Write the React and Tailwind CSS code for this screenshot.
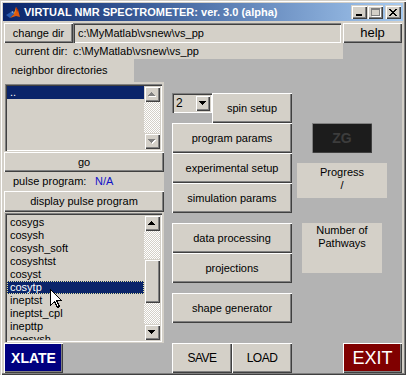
import clsx from "clsx";
import { twMerge } from "tailwind-merge";

// win classic bevels
const raised = "shadow-[inset_1px_1px_0_#fff,inset_-1px_-1px_0_#404040,inset_-2px_-2px_0_#808080]";
const raised2 = "shadow-[inset_1px_1px_0_#d4d0c8,inset_2px_2px_0_#fff,inset_-1px_-1px_0_#404040,inset_-2px_-2px_0_#808080]";
const sunken = "shadow-[inset_1px_1px_0_#808080,inset_2px_2px_0_#404040,inset_-1px_-1px_0_#fff,inset_-2px_-2px_0_#d4d0c8]";

const Button = ({ className, children }) => (
  <div
    className={twMerge(
      "flex shrink-0 items-center justify-center bg-[#d4d0c8] font-normal text-black",
      raised,
      className
    )}
  >
    {children}
  </div>
);

const Tri = ({ up, disabled }) => {
  const d = up
    ? "M3 0h1v1H3zM2 1h3v1H2zM1 2h5v1H1zM0 3h7v1H0z"
    : "M0 0h7v1H0zM1 1h5v1H1zM2 2h3v1H2zM3 3h1v1H3z";
  return (
    <svg width="8" height="5" viewBox="0 0 8 5" shapeRendering="crispEdges">
      {disabled && <path d={d} fill="#fff" transform="translate(1 1)" />}
      <path d={d} fill={disabled ? "#808080" : "#000"} />
    </svg>
  );
};

const ArrowBtn = ({ up, disabled }) => (
  <div className={clsx("flex h-[16px] w-[16px] shrink-0 items-center justify-center bg-[#d4d0c8]", raised2)}>
    <Tri up={up} disabled={disabled} />
  </div>
);

const checker =
  "bg-[repeating-conic-gradient(#ffffff_0_25%,#d4d0c8_0_50%)] bg-size-[2px_2px]";

const ListBox = ({ items, selected, focus, thumb, className }) => (
  <div className={clsx("shrink-0 bg-[#d4d0c8] pl-[1px] pr-[2px]", className)}>
    <div className={clsx("flex h-full p-[2px]", sunken)}>
      <div className={clsx("min-w-0 flex-1 overflow-hidden", thumb && "pt-[1px]")}>
        {items.map((it) => (
          <div
            key={it}
            className={clsx(
              "h-[13px] whitespace-nowrap pl-[3px] leading-[13px]",
              it === selected && "bg-[#0a246a] text-white",
              it === selected && focus && "outline-1 -outline-offset-1 outline-dotted outline-[#e0e0a0]"
            )}
          >
            {it}
          </div>
        ))}
      </div>
      <div className={clsx("flex w-[16px] flex-col", checker)}>
        <ArrowBtn up disabled={!thumb} />
        {thumb ? (
          <>
            <div className="h-[28px]" />
            <div className={clsx("h-[44px] bg-[#d4d0c8]", raised2)} />
            <div className="flex-1" />
          </>
        ) : (
          <div className="flex-1" />
        )}
        <ArrowBtn disabled={!thumb} />
      </div>
    </div>
  </div>
);

const MatlabIcon = () => (
  <svg width="16" height="16" viewBox="0 0 16 16">
    <path d="M1 11 L6 8 L9 10 L5 14 Z" fill="#2a5db0" />
    <path d="M5 14 L9 10 L11 3 L13 6 L15 13 L11 12 Z" fill="#e05a10" />
    <path d="M9 10 L11 3 L10 9 Z" fill="#f8c020" />
    <path d="M11 3 L13 6 L12 8 Z" fill="#b02000" />
    <path d="M6 8 L8 7 L9 10 Z" fill="#8fb0e0" />
  </svg>
);

const Cursor = () => (
  <svg width="12" height="20" viewBox="0 0 12 20" shapeRendering="crispEdges" className="absolute left-[50px] top-[289px]">
    <path d="M0.5 0.5 L0.5 16.5 L4.5 12.5 L7.5 18.5 L9.5 17.5 L6.5 11.5 L11.5 11.5 Z" fill="#fff" stroke="#000" strokeWidth="1" />
  </svg>
);

const pulses = [
  "cosygs",
  "cosysh",
  "cosysh_soft",
  "cosyshtst",
  "cosyst",
  "cosytp",
  "ineptst",
  "ineptst_cpl",
  "inepttp",
  "noesysh",
];

export default function App() {
  return (
    <div
      className={clsx(
        "relative flex h-[375px] w-[406px] flex-col overflow-hidden bg-[#d4d0c8] p-[3px] font-['Liberation_Sans',Arial,sans-serif] text-[11px] text-black",
        raised2
      )}
    >
      {/* title bar */}
      <div className="flex h-[18px] shrink-0 items-center bg-linear-to-r from-[#0a246a] to-[#a6caf0] pl-[2px] pr-[2px]">
        <MatlabIcon />
        <span className="ml-[3px] text-[11px] font-bold text-white">
          VIRTUAL NMR SPECTROMETER: ver. 3.0 (alpha)
        </span>
        <div className="ml-auto flex items-center">
          <div className={clsx("flex h-[14px] w-[16px] items-end justify-center bg-[#d4d0c8] pb-[3px]", raised2)}>
            <div className="h-[2px] w-[6px] bg-black" />
          </div>
          <div className={clsx("flex h-[14px] w-[16px] items-center justify-center bg-[#d4d0c8]", raised2)}>
            <div className="h-[8px] w-[9px] border border-t-2 border-[#808080] shadow-[1px_1px_0_#fff]" />
          </div>
          <div className={clsx("ml-[2px] flex h-[14px] w-[16px] items-center justify-center bg-[#d4d0c8]", raised2)}>
            <svg width="8" height="7" viewBox="0 0 8 7" shapeRendering="crispEdges">
              <path d="M0 0h2v1H0zM6 0h2v1H6zM1 1h2v1H1zM5 1h2v1H5zM2 2h4v1H2zM3 3h2v1H3zM2 4h4v1H2zM1 5h2v1H1zM5 5h2v1H5zM0 6h2v1H0zM6 6h2v1H6z" fill="#000" />
            </svg>
          </div>
        </div>
      </div>

      {/* figure client area */}
      <div className="ml-[1px] mt-[1px] flex w-[398px] flex-1 flex-col bg-[#b3b3b3]">
        <div className="flex h-[21px] shrink-0 items-start bg-[#d4d0c8] pt-[1px]">
          <Button className="h-[20px] w-[69px]">change dir</Button>
          <div className={clsx("flex h-[20px] w-[269px] items-center pl-[5px]", sunken)}>
            c:\MyMatlab\vsnew\vs_pp
          </div>
          <Button className="ml-[2px] h-[20px] w-[59px] text-[13px]">help</Button>
        </div>

        <div className="flex h-[16px] w-[339px] shrink-0 items-center bg-[#d4d0c8] pl-[11px]">
          <span className="w-[58px]">current dir:</span>
          <span>c:\MyMatlab\vsnew\vs_pp</span>
        </div>

        <div className="flex flex-1">
          {/* left column */}
          <div className="flex w-[160px] flex-col">
            <div className="flex h-[23px] w-[130px] items-center bg-[#d4d0c8] pl-[7px]">
              neighbor directories
            </div>
            <ListBox items={[".."]} selected=".." className="h-[70px] pt-[2px] pb-[1px]" />
            <Button className="h-[20px] w-[160px]">go</Button>
            <div className="flex h-[19px] items-center bg-[#d4d0c8] pl-[9px]">
              <span className="w-[82px]">pulse program:</span>
              <span className="text-[#1010c8]">N/A</span>
            </div>
            <Button className="h-[21px] w-[160px]">display pulse program</Button>
            <ListBox
              items={pulses}
              selected="cosytp"
              focus
              thumb
              className="h-[131px] pt-[1px] pb-[1px]"
            />
            <Button className="h-[30px] w-[59px] bg-[#000080] text-[14px] font-bold text-white">
              XLATE
            </Button>
          </div>

          {/* middle column */}
          <div className="ml-[8px] flex w-[120px] flex-col pt-[34px]">
            <div className="flex items-start">
              <div className={clsx("flex h-[20px] w-[40px] items-center justify-between bg-[#d4d0c8] pl-[4px] pr-[2px]", sunken)}>
                <span className="text-[12px]">2</span>
                <div className={clsx("flex h-[16px] w-[15px] items-center justify-center bg-[#d4d0c8]", raised2)}>
                  <Tri />
                </div>
              </div>
              <Button className="h-[30px] w-[80px]">spin setup</Button>
            </div>
            <Button className="h-[30px] w-[120px]">program params</Button>
            <Button className="h-[30px] w-[120px]">experimental setup</Button>
            <Button className="h-[30px] w-[120px]">simulation params</Button>
            <Button className="mt-[10px] h-[30px] w-[120px]">data processing</Button>
            <Button className="h-[30px] w-[120px]">projections</Button>
            <Button className="mt-[10px] h-[30px] w-[120px]">shape generator</Button>
            <div className="mt-[20px] flex">
              <Button className="h-[30px] w-[60px] text-[12px] tracking-[-0.5px]">SAVE</Button>
              <Button className="h-[30px] w-[60px] text-[12px] tracking-[-0.5px]">LOAD</Button>
            </div>
          </div>

          {/* right column */}
          <div className="flex w-[110px] flex-col">
            <div className="ml-[20px] mt-[64px] flex h-[30px] w-[60px] items-center justify-center bg-[#1c1c1c] text-[14px] font-bold text-[#3c3c3c] shadow-[inset_1px_1px_0_#808080,inset_-1px_-1px_0_#404040]">
              ZG
            </div>
            <div className="ml-[5px] mt-[10px] flex h-[35px] w-[90px] flex-col items-center bg-[#d4d0c8] pt-[3px] leading-[13px]">
              <span>Progress</span>
              <span>/</span>
            </div>
            <div className="ml-[10px] mt-[25px] flex h-[50px] w-[80px] flex-col items-center bg-[#d4d0c8] pt-[1px] leading-[13px]">
              <span>Number of</span>
              <span>Pathways</span>
            </div>
            <Button className="ml-[51px] mt-[70px] h-[30px] w-[59px] bg-[#800000] text-[18px] text-white">
              EXIT
            </Button>
          </div>
        </div>
      </div>
      <Cursor />
    </div>
  );
}
